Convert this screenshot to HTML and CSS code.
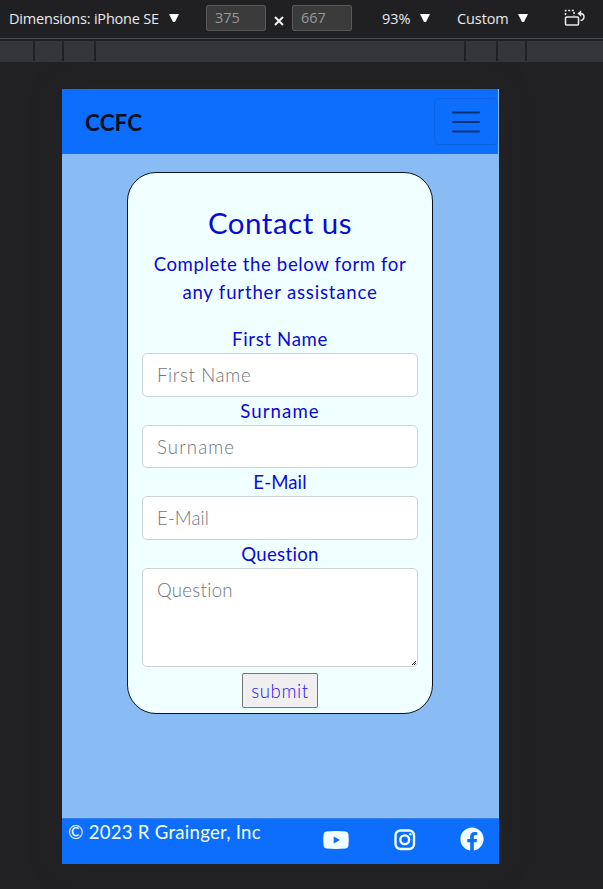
FILE: index.html
```html
<!DOCTYPE html>
<html lang="en">
<head>
<meta charset="utf-8">
<title>Contact us</title>
<link rel="stylesheet" href="styles.css">
</head>
<body>
<header class="toolbar">
  <span class="device-name">Dimensions: iPhone SE</span><i class="caret"></i>
  <span class="size size-w">375</span>
  <svg class="times" width="10" height="10" viewBox="0 0 10 10"><path d="M1 1l8 8M9 1L1 9"/></svg>
  <span class="size">667</span>
  <span class="zoom">93%</span><i class="caret"></i>
  <span class="throttle">Custom</span><i class="caret"></i>
  <svg class="rotate" width="22" height="18" viewBox="0 0 22 18"><rect x="1.5" y="8" width="13" height="8" rx="1"/><path stroke-dasharray="2 1.6" d="M1.5 6V1.5h8.5V7"/><path d="M16 4.500c2.800 0 4 1.200 4 3.300 0 2-1.200 3.400-3.500 3.700"/><path class="tip" d="M13.500 4.500l3.700-3.200v6.400z"/></svg>
</header>
<div class="ruler"><i class="r1"></i><i class="r2"></i><i class="r3"></i><i class="r4"></i><i class="r5"></i><i class="r6"></i><i class="r7"></i></div>
<div class="device">
  <nav class="navbar">
    <a class="brand">CCFC</a>
    <span class="toggler"><svg width="30" height="24" viewBox="0 0 30 24"><path d="M2 2.500h26M2 12h26M2 21.500h26"/></svg></span>
  </nav>
  <main class="page">
    <form class="card">
      <h1>Contact us</h1>
      <p class="lead"><span class="lead-a">Complete the below form for</span><br><span class="lead-b">any further assistance</span></p>
      <label class="l-first">First Name</label>
      <input class="field p-first" placeholder="First Name">
      <label class="l-sur">Surname</label>
      <input class="field p-sur" placeholder="Surname">
      <label class="l-mail">E-Mail</label>
      <input class="field p-mail" placeholder="E-Mail">
      <label class="l-q">Question</label>
      <div class="area-wrap">
        <textarea class="field area p-q" placeholder="Question"></textarea>
        <svg class="grip" width="4" height="4" viewBox="0 0 4 4"><path d="M0 4L4 0M2 4l2-2"/></svg>
      </div>
      <button type="button" class="submit">submit</button>
    </form>
  </main>
  <footer class="footer">
    <span class="copy">© 2023 R Grainger, Inc</span>
    <svg class="yt" width="26" height="18" viewBox="0 0 26 18"><path fill-rule="evenodd" d="M3.500.5Q13-.4 22.500.5 25 .8 25.400 3.200 26 9 25.400 14.800 25 17.200 22.500 17.500 13 18.400 3.500 17.500 1 17.200.6 14.800 0 9 .6 3.200 1 .8 3.500.5zM10.700 5.400v7.200L17 9z"/></svg>
    <svg class="ig" width="22" height="22" viewBox="0 0 22 22"><rect x="1.500" y="1.500" width="18.500" height="18.500" rx="5"/><circle cx="10.750" cy="10.750" r="4.400"/><circle class="dot" cx="16.300" cy="5.300" r="1.300"/></svg>
    <svg class="fb" width="24" height="24" viewBox="0 0 512 512"><path d="M504 256C504 119 393 8 256 8S8 119 8 256c0 123.800 90.700 226.400 209.300 245V327.700h-63V256h63v-54.600c0-62.200 37-96.500 93.700-96.500 27.100 0 55.500 4.800 55.500 4.800v61h-31.300c-30.800 0-40.400 19.100-40.400 38.700V256h68.800l-11 71.700h-57.800V501C413.300 482.400 504 379.800 504 256z"/></svg>
  </footer>
</div>
</body>
</html>
```
FILE: styles.css
```css
* { box-sizing: border-box; }
body {
  margin: 0;
  height: 889px;
  overflow: hidden;
  background: #212123;
  font-family: Lato, "Liberation Sans", sans-serif;
}
svg { display: block; fill: none; flex: none; }
.toolbar {
  display: flex;
  align-items: center;
  height: 39px;
  padding: 0 0 2px 9px;
  border-bottom: 1px solid #4a4b4e;
  background: #202023;
  color: #e8eaed;
  font: 14.5px "Open Sans", "Noto Sans", sans-serif;
  white-space: nowrap;
}
.device-name { width: 160px; letter-spacing: -0.2px; }
.caret { width: 10px; height: 8px; background: #fff; clip-path: polygon(0 0, 100% 0, 60% 100%, 40% 100%); }
.size {
  width: 60px;
  height: 26px;
  padding-left: 8px;
  border: 1px solid #58585a;
  border-radius: 2px;
  background: #3b3b3b;
  color: #96989b;
  line-height: 24px;
}
.size-w { margin-left: 27px; }
.times { margin: 6px 8px 0; stroke: #f1f1f1; stroke-width: 2; }
.zoom { width: 38px; margin-left: 30px; letter-spacing: -0.1px; }
.throttle { width: 61px; margin-left: 27px; letter-spacing: -0.1px; }
.rotate { margin-left: 36px; stroke: #e8eaed; stroke-width: 1.500; }
.rotate .tip { fill: #e8eaed; stroke: none; }
.ruler { display: flex; gap: 2px; height: 21px; margin-top: 2px; border-bottom: 1px solid #35363a; }
.ruler i { background: #35363a; }
.r1 { width: 33px; }
.r2 { width: 27px; }
.r3 { width: 30px; }
.r4 { width: 368px; }
.r5 { width: 30px; }
.r6 { width: 27px; }
.r7 { flex: 1; }
.device {
  display: flex;
  flex-direction: column;
  width: 437px;
  height: 775px;
  margin: 27px 0 0 62px;
  background: #89bcf4;
  box-shadow: 0 0 24px #242426;
}
.navbar {
  display: flex;
  align-items: center;
  justify-content: space-between;
  width: 436px;
  height: 65px;
  padding-left: 23px;
  background: #0d6efd;
}
.brand { padding-top: 1px; color: #020f22; font-size: 22.5px; font-weight: 700; letter-spacing: 0.1px; }
.toggler {
  display: flex;
  align-items: center;
  justify-content: center;
  width: 64px;
  height: 47px;
  border: 1px solid #0c63e4;
  border-radius: 5px;
}
.toggler svg { stroke: #063374; stroke-width: 2; stroke-linecap: round; }
.page { flex: 1; padding: 18px 66px 0 65px; }
.card {
  display: flex;
  flex-direction: column;
  align-items: center;
  height: 542px;
  padding: 32px 14px 0;
  border: 1px solid #07131f;
  border-radius: 29px;
  background: #f0ffff;
  color: #0909d8;
  font-size: 18.6px;
  text-align: center;
  white-space: nowrap;
}
h1 { margin: 0; font-size: 29.500px; font-weight: 400; line-height: 36px; letter-spacing: 0.5px; }
.lead { margin: 9px 0 19px; line-height: 28px; }
.lead-a { letter-spacing: 0.6px; }
.lead-b { letter-spacing: 0.8px; }
label { height: 28px; line-height: 28px; }
.l-first, .p-first { letter-spacing: 0.65px; }
.l-sur, .p-sur { letter-spacing: 1.1px; }
.l-mail, .p-mail { letter-spacing: 0.1px; }
.l-q, .p-q { letter-spacing: 0.3px; }
.field {
  display: block;
  width: 276px;
  height: 43.7px;
  margin: 0;
  padding: 7px 14px;
  border: 1px solid #ced4da;
  border-radius: 5px;
  background: #fff;
  font: 300 18.6px/28px Lato, sans-serif;
}
.field::placeholder { color: #6c757d; opacity: 1; }
.area-wrap { position: relative; }
.area { height: 99px; resize: none; }
.grip { position: absolute; right: 2px; bottom: 2px; stroke: #333; }
.submit {
  width: 76px;
  height: 35px;
  margin-top: 6px;
  padding: 0;
  border: 1px solid #767676;
  border-radius: 2px;
  background: #efefef;
  color: #2a12f2;
  font: 300 18.6px Lato, sans-serif;
  letter-spacing: 0.6px;
}
.footer {
  display: flex;
  height: 46px;
  padding: 0 15px 0 6px;
  border-top: 1px solid #327fec;
  background: #0d6efd;
  color: #f0ffff;
}
.copy { width: 255px; font-size: 18.6px; line-height: 27px; letter-spacing: 0.25px; }
.yt { margin-top: 12px; fill: #f0ffff; }
.ig { margin: 10px 0 0 45px; stroke: #f0ffff; stroke-width: 2.400; }
.ig .dot { fill: #f0ffff; stroke: none; }
.fb { margin: 8px 0 0 auto; fill: #f0ffff; }
```
